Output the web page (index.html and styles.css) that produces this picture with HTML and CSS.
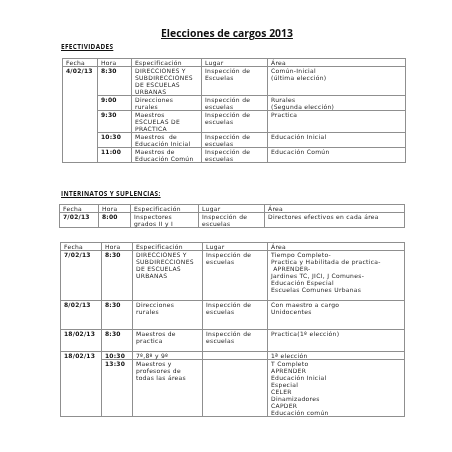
FILE: index.html
```html
<!DOCTYPE html>
<html lang="es">
<head>
<meta charset="utf-8">
<title>Elecciones de cargos 2013</title>
<link rel="stylesheet" href="styles.css">
</head>
<body>
<div class="page">
  <h1 class="title">Elecciones de cargos 2013</h1>
  <h2 class="section sec1">EFECTIVIDADES</h2>
  <table class="t t1">
    <colgroup><col class="c1"><col class="c2"><col class="c3"><col class="c4"><col class="c5"></colgroup>
    <tr class="hd"><td>Fecha</td><td>Hora</td><td>Especificación</td><td>Lugar</td><td>Área</td></tr>
    <tr><td class="b" rowspan="5">4/02/13</td><td class="b">8:30</td><td>DIRECCIONES Y<br>SUBDIRECCIONES<br>DE ESCUELAS<br>URBANAS</td><td>Inspección de<br>Escuelas</td><td>Común-Inicial<br>(última elección)</td></tr>
    <tr><td class="b">9:00</td><td>Direcciones<br>rurales</td><td>Inspección de<br>escuelas</td><td>Rurales<br>(Segunda elección)</td></tr>
    <tr><td class="b">9:30</td><td>Maestros<br>ESCUELAS DE<br>PRACTICA</td><td>Inspección de<br>escuelas</td><td>Practica</td></tr>
    <tr><td class="b">10:30</td><td>Maestros&nbsp; de<br>Educación Inicial</td><td>Inspección de<br>escuelas</td><td>Educación Inicial</td></tr>
    <tr><td class="b">11:00</td><td>Maestros de<br>Educación Común</td><td>Inspección de<br>escuelas</td><td>Educación Común</td></tr>
  </table>

  <h2 class="section sec2">INTERINATOS Y SUPLENCIAS:</h2>
  <table class="t t2">
    <colgroup><col class="c1"><col class="c2"><col class="c3"><col class="c4"><col class="c5"></colgroup>
    <tr class="hd"><td>Fecha</td><td>Hora</td><td>Especificación</td><td>Lugar</td><td>Área</td></tr>
    <tr><td class="b">7/02/13</td><td class="b">8:00</td><td>Inspectores<br>grados II y I</td><td>Inspección de<br>escuelas</td><td>Directores efectivos en cada área</td></tr>
  </table>

  <table class="t t3">
    <colgroup><col class="c1"><col class="c2"><col class="c3"><col class="c4"><col class="c5"></colgroup>
    <tr class="hd"><td>Fecha</td><td>Hora</td><td>Especificación</td><td>Lugar</td><td>Área</td></tr>
    <tr><td class="b">7/02/13</td><td class="b">8:30</td><td>DIRECCIONES Y<br>SUBDIRECCIONES<br>DE ESCUELAS<br>URBANAS</td><td>Inspección de<br>escuelas</td><td>Tiempo Completo-<br>Practica y Habilitada de practica-<br>&nbsp;APRENDER-<br>Jardines TC, JICI, J Comunes-<br>Educación Especial<br>Escuelas Comunes Urbanas<br>&nbsp;</td></tr>
    <tr><td class="b">8/02/13</td><td class="b">8:30</td><td>Direcciones<br>rurales</td><td>Inspección de<br>escuelas</td><td>Con maestro a cargo<br>Unidocentes<br>&nbsp;<br>&nbsp;</td></tr>
    <tr><td class="b">18/02/13</td><td class="b">8:30</td><td>Maestros de<br>practica</td><td>Inspección de<br>escuelas</td><td>Practica(1º elección)<br>&nbsp;<br>&nbsp;</td></tr>
    <tr><td class="b" rowspan="2">18/02/13</td><td class="b">10:30</td><td>7º,8º y 9º</td><td></td><td>1ª elección</td></tr>
    <tr><td class="b">13:30</td><td>Maestros y<br>profesores de<br>todas las áreas</td><td></td><td>T Completo<br>APRENDER<br>Educación Inicial<br>Especial<br>CELER<br>Dinamizadores<br>CAPDER<br>Educación común</td></tr>
  </table>
</div>
</body>
</html>
```
FILE: styles.css
```css
html, body {
  margin: 0;
  padding: 0;
  background: #ffffff;
}

body {
  font-family: "DejaVu Sans", "Liberation Sans", sans-serif;
  color: #1e1e1e;
}

.page {
  width: 452px;
  height: 452px;
  box-sizing: border-box;
  padding: 27px 0 0 61px;
  overflow: hidden;
  will-change: transform;
}

.title {
  margin: 0 0 0 100px;
  font-family: "Open Sans", "Liberation Sans", sans-serif;
  font-size: 10.4px;
  line-height: 12px;
  font-weight: 700;
  text-decoration: underline;
  color: #111111;
}

.section {
  margin: 0;
  font-family: "Open Sans", "Liberation Sans", sans-serif;
  font-size: 6.4px;
  letter-spacing: 0.35px;
  line-height: 8px;
  font-weight: 700;
  text-decoration: underline;
  color: #111111;
}

.sec1 {
  margin-top: 4px;
  margin-bottom: 7px;
}

.sec2 {
  margin-top: 27px;
  margin-bottom: 6px;
}

.t {
  border-collapse: collapse;
  table-layout: fixed;
  width: 344px;
  font-size: 6px;
  letter-spacing: 0.3px;
  line-height: 7px;
}

.t td {
  border: 1px solid #8f8f8f;
  padding: 0 1px 0 3px;
  vertical-align: top;
  white-space: nowrap;
}

.t .b {
  font-weight: 700;
  color: #111111;
  letter-spacing: 0.2px;
}

.t1 { margin-left: 1px; width: 343px; }
.t1 .c1 { width: 35px; }
.t1 .c2 { width: 34px; }
.t1 .c3 { width: 70px; }
.t1 .c4 { width: 66px; }
.t1 .c5 { width: 138px; }

.t2 { margin-left: -2px; width: 345px; }
.t2 .c1 { width: 39px; }
.t2 .c2 { width: 32px; }
.t2 .c3 { width: 68px; }
.t2 .c4 { width: 66px; }
.t2 .c5 { width: 140px; }

.t3 { margin-top: 14px; margin-left: -1px; width: 344px; }
.t3 .c1 { width: 41px; }
.t3 .c2 { width: 31px; }
.t3 .c3 { width: 70px; }
.t3 .c4 { width: 65px; }
.t3 .c5 { width: 137px; }
```
